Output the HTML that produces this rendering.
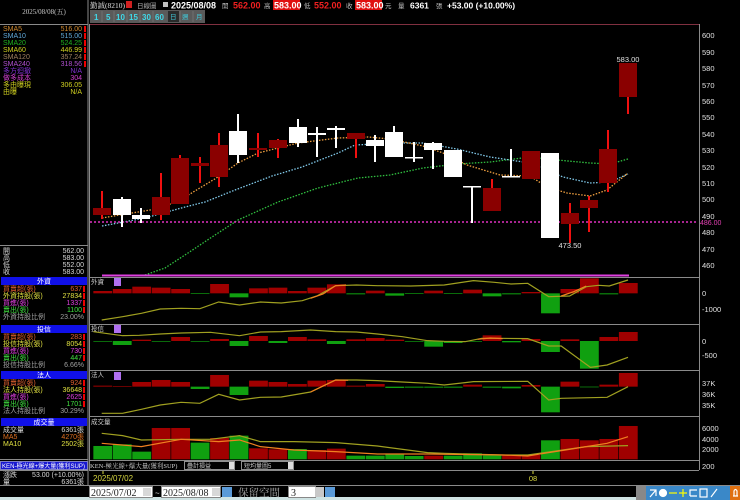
<!DOCTYPE html>
<html><head><meta charset="utf-8"><style>
html,body{margin:0;padding:0;background:#000;width:740px;height:500px;overflow:hidden}
svg{display:block}
text{font-family:"Liberation Sans","Noto Sans CJK TC",sans-serif}
.s{font-size:7px;font-family:"Liberation Serif","Noto Serif CJK SC",serif}
.ax{font-size:7.5px;fill:#e0e0e0}
.sf{font-family:"Liberation Serif","Noto Serif CJK SC",serif}
</style></head><body>
<svg width="740" height="500" viewBox="0 0 740 500" xmlns="http://www.w3.org/2000/svg">
<rect width="740" height="500" fill="#000"/>
<g stroke="#8a8a8a" stroke-width="1" fill="none">
<line x1="88" y1="0" x2="88" y2="485"/>
<line x1="0" y1="24.5" x2="88" y2="24.5"/>
<line x1="0" y1="245.5" x2="88" y2="245.5"/>
<line x1="0" y1="459.5" x2="88" y2="459.5"/>
<line x1="0" y1="470.5" x2="88" y2="470.5"/>
<line x1="0" y1="485.5" x2="740" y2="485.5"/>
</g>
<text x="44" y="14" class="s" fill="#c8c8c8" text-anchor="middle">2025/08/08(五)</text>
<g class="s">
<text x="3" y="31" fill="#d08a30">SMA5</text><text x="82" y="31" fill="#d08a30" text-anchor="end">516.00</text>
<text x="3" y="38" fill="#60a8d8">SMA10</text><text x="82" y="38" fill="#60a8d8" text-anchor="end">515.00</text>
<text x="3" y="45" fill="#20b020">SMA20</text><text x="82" y="45" fill="#20b020" text-anchor="end">524.25</text>
<text x="3" y="52" fill="#d0d020">SMA60</text><text x="82" y="52" fill="#d0d020" text-anchor="end">446.99</text>
<text x="3" y="59" fill="#a08060">SMA120</text><text x="82" y="59" fill="#a08060" text-anchor="end">357.24</text>
<text x="3" y="66" fill="#b050d0">SMA240</text><text x="82" y="66" fill="#b050d0" text-anchor="end">318.56</text>
<text x="3" y="73" fill="#8030d0">多方迴撤</text><text x="82" y="73" fill="#8030d0" text-anchor="end">N/A</text>
<text x="3" y="80" fill="#d040d0">做多成本</text><text x="82" y="80" fill="#d040d0" text-anchor="end">304</text>
<text x="3" y="87" fill="#d0d020">多由曝現</text><text x="82" y="87" fill="#d0d020" text-anchor="end">306.05</text>
<text x="3" y="94" fill="#d0d020">由曝</text><text x="82" y="94" fill="#d0d020" text-anchor="end">N/A</text>
</g>
<g fill="#e00" ><rect x="84" y="26" width="2" height="6"/><rect x="84" y="33" width="2" height="6"/><rect x="84" y="40" width="2" height="6"/><rect x="84" y="47" width="2" height="6"/><rect x="84" y="54" width="2" height="6"/><rect x="84" y="61" width="2" height="6"/></g>
<g class="s" fill="#d8d8d8">
<text x="3" y="253">開</text><text x="84" y="253" text-anchor="end">562.00</text>
<text x="3" y="260">高</text><text x="84" y="260" text-anchor="end">583.00</text>
<text x="3" y="267">低</text><text x="84" y="267" text-anchor="end">552.00</text>
<text x="3" y="274">收</text><text x="84" y="274" text-anchor="end">583.00</text>
</g>
<g class="s">
<rect x="1" y="277" width="86" height="8" fill="#1010e8"/><text x="44" y="283.5" fill="#fff" text-anchor="middle">外資</text>
<text x="3" y="291" fill="#e06030">買賣超(張)</text><text x="82" y="291" fill="#e06030" text-anchor="end">637</text>
<text x="3" y="298" fill="#e0e040">外資持股(張)</text><text x="82" y="298" fill="#e0e040" text-anchor="end">27834</text>
<text x="3" y="305" fill="#e040e0">買進(張)</text><text x="82" y="305" fill="#e040e0" text-anchor="end">1337</text>
<text x="3" y="312" fill="#40e040">賣出(張)</text><text x="82" y="312" fill="#40e040" text-anchor="end">1100</text>
<text x="3" y="319" fill="#a0a0a0">外資持股比例</text><text x="84" y="319" fill="#a0a0a0" text-anchor="end">23.00%</text>
<rect x="1" y="325" width="86" height="8" fill="#1010e8"/><text x="44" y="331.5" fill="#fff" text-anchor="middle">投信</text>
<text x="3" y="339" fill="#e06030">買賣超(張)</text><text x="82" y="339" fill="#e06030" text-anchor="end">283</text>
<text x="3" y="346" fill="#e0e040">投信持股(張)</text><text x="82" y="346" fill="#e0e040" text-anchor="end">8054</text>
<text x="3" y="353" fill="#e040e0">買進(張)</text><text x="82" y="353" fill="#e040e0" text-anchor="end">730</text>
<text x="3" y="360" fill="#40e040">賣出(張)</text><text x="82" y="360" fill="#40e040" text-anchor="end">447</text>
<text x="3" y="367" fill="#a0a0a0">投信持股比例</text><text x="84" y="367" fill="#a0a0a0" text-anchor="end">6.66%</text>
<rect x="1" y="371" width="86" height="8" fill="#1010e8"/><text x="44" y="377.5" fill="#fff" text-anchor="middle">法人</text>
<text x="3" y="385" fill="#e06030">買賣超(張)</text><text x="82" y="385" fill="#e06030" text-anchor="end">924</text>
<text x="3" y="392" fill="#e0e040">法人持股(張)</text><text x="82" y="392" fill="#e0e040" text-anchor="end">36648</text>
<text x="3" y="399" fill="#e040e0">買進(張)</text><text x="82" y="399" fill="#e040e0" text-anchor="end">2625</text>
<text x="3" y="406" fill="#40e040">賣出(張)</text><text x="82" y="406" fill="#40e040" text-anchor="end">1701</text>
<text x="3" y="413" fill="#a0a0a0">法人持股比例</text><text x="84" y="413" fill="#a0a0a0" text-anchor="end">30.29%</text>
<rect x="1" y="418" width="86" height="8" fill="#1010e8"/><text x="44" y="424.5" fill="#fff" text-anchor="middle">成交量</text>
<text x="3" y="432" fill="#d8d8d8">成交量</text><text x="84" y="432" fill="#d8d8d8" text-anchor="end">6361張</text>
<text x="3" y="439" fill="#e07020">MA5</text><text x="84" y="439" fill="#e07020" text-anchor="end">4270張</text>
<text x="3" y="446" fill="#e0e040">MA10</text><text x="84" y="446" fill="#e0e040" text-anchor="end">2502張</text>
<rect x="0.5" y="461.5" width="87" height="8" fill="#1818d0" stroke="#8080c0"/><text x="2" y="468" fill="#fff" font-size="6" textLength="83" lengthAdjust="spacingAndGlyphs">KEN-極光線+爆大量(獲利SUP)</text>
<text x="3" y="477" fill="#d8d8d8">漲跌</text><text x="84" y="477" fill="#d8d8d8" text-anchor="end">53.00 (+10.00%)</text>
<text x="3" y="484" fill="#d8d8d8">量</text><text x="84" y="484" fill="#d8d8d8" text-anchor="end">6361張</text>
</g>
<g fill="#e00"><rect x="83" y="286" width="2" height="6"/><rect x="83" y="293" width="2" height="6"/><rect x="83" y="300" width="2" height="6"/><rect x="83" y="307" width="2" height="6"/><rect x="83" y="334" width="2" height="6"/><rect x="83" y="341" width="2" height="6"/><rect x="83" y="348" width="2" height="6"/><rect x="83" y="355" width="2" height="6"/><rect x="83" y="380" width="2" height="6"/><rect x="83" y="387" width="2" height="6"/><rect x="83" y="394" width="2" height="6"/><rect x="83" y="401" width="2" height="6"/></g>

<text x="90" y="8" fill="#e0e0e0" font-size="7.5" class="sf">勤誠(8210)</text>
<rect x="126" y="1" width="6" height="7" fill="#d02020"/>
<text x="137" y="8" fill="#b0b0b0" font-size="6.5">日線圖</text>
<rect x="163" y="2" width="5" height="5" fill="#c0c0c0"/>
<text x="171" y="8.5" fill="#fff" font-size="9" font-weight="bold">2025/08/08</text>
<text x="222" y="8" fill="#bbb" font-size="6.5">開</text>
<text x="233" y="8.5" fill="#f02020" font-size="9" font-weight="bold">562.00</text>
<text x="264" y="8" fill="#bbb" font-size="6.5">高</text>
<rect x="273" y="0" width="27" height="10" fill="#e01010"/><text x="274" y="8.5" fill="#fff" font-size="9" font-weight="bold">583.00</text>
<text x="304" y="8" fill="#bbb" font-size="6.5">低</text>
<text x="314" y="8.5" fill="#f02020" font-size="9" font-weight="bold">552.00</text>
<text x="346" y="8" fill="#bbb" font-size="6.5">收</text>
<rect x="355" y="0" width="27" height="10" fill="#e01010"/><text x="356" y="8.5" fill="#fff" font-size="9" font-weight="bold">583.00</text>
<text x="385" y="8" fill="#bbb" font-size="6.5">元</text>
<text x="398" y="8" fill="#bbb" font-size="6.5">量</text>
<text x="410" y="8.5" fill="#fff" font-size="8.5" font-weight="bold">6361</text>
<text x="436" y="8" fill="#bbb" font-size="6.5">張</text>
<text x="447" y="8.5" fill="#fff" font-size="8.5" font-weight="bold">+53.00 (+10.00%)</text>
<rect x="90" y="10" width="115" height="13" fill="#5a5a5a"/>
<g font-size="8" fill="#40d8e8" font-weight="bold" class="sf">
<text x="94" y="20">1</text><text x="106" y="20">5</text><text x="116" y="20">10</text><text x="129" y="20">15</text><text x="142" y="20">30</text><text x="155" y="20">60</text>
</g>
<rect x="168" y="11" width="11" height="11" fill="#2a2a2a"/>
<g font-size="6.5" fill="#40c8d8"><text x="170" y="19">日</text><text x="182" y="19">週</text><text x="196" y="19">月</text></g>
<g stroke="#707070"><line x1="102" y1="11" x2="102" y2="22"/><line x1="114" y1="11" x2="114" y2="22"/><line x1="127" y1="11" x2="127" y2="22"/><line x1="140" y1="11" x2="140" y2="22"/><line x1="153" y1="11" x2="153" y2="22"/><line x1="180" y1="11" x2="180" y2="22"/><line x1="193" y1="11" x2="193" y2="22"/></g>

<g stroke="#8a8a8a" fill="none">
<line x1="89" y1="24.5" x2="699" y2="24.5" stroke="#803040"/>
<line x1="699.5" y1="24" x2="699.5" y2="470"/>
<line x1="89" y1="277.5" x2="699" y2="277.5"/>
<line x1="89" y1="324.5" x2="699" y2="324.5"/>
<line x1="89" y1="370.5" x2="699" y2="370.5"/>
<line x1="89" y1="416.5" x2="699" y2="416.5"/>
<line x1="89" y1="460.5" x2="699" y2="460.5"/>
<line x1="89" y1="470.5" x2="699" y2="470.5"/>
<line x1="89.5" y1="24" x2="89.5" y2="470"/>
</g>
<g class="ax">
<text x="702" y="38">600</text><text x="702" y="55">590</text><text x="702" y="71">580</text><text x="702" y="88">570</text><text x="702" y="104">560</text><text x="702" y="120">550</text><text x="702" y="137">540</text><text x="702" y="153">530</text><text x="702" y="170">520</text><text x="702" y="186">510</text><text x="702" y="202">500</text><text x="702" y="219">490</text><text x="702" y="235">480</text><text x="702" y="252">470</text><text x="702" y="268">460</text>
<text x="702" y="296">0</text><text x="702" y="312">-1000</text>
<text x="702" y="344">0</text><text x="702" y="358">-500</text>
<text x="702" y="386">37K</text><text x="702" y="397">36K</text><text x="702" y="408">35K</text>
<text x="702" y="431">6000</text><text x="702" y="442">4000</text><text x="702" y="452">2000</text>
<text x="702" y="469">200</text>
</g>
<text x="700" y="225" fill="#e040b0" font-size="7">486.00</text>

<g fill="none" stroke-width="1.3" stroke-dasharray="1.5,1.5">
<polyline stroke="#30c040" points="145,275 165,268 188,253 212,237 238,220 278,202 318,188 358,178 390,175 423,168 457,164 490,162 530,157 557,160 590,163 610,164 628,159"/>
<polyline stroke="#80c8e8" points="102,226 145,218 185,207 205,202 235,190 272,176 302,167 338,153 355,145 395,143 423,143 457,149 490,157 530,163 563,177 590,183 610,182 628,174"/>
<polyline stroke="#f0a040" points="102,218 162,208 185,197 218,177 238,163 258,153 298,143 338,138 368,137 390,139 423,146 443,153 467,165 500,175 530,176 547,187 567,193 590,196 607,190 628,173"/>
<line x1="90" y1="222" x2="698" y2="222" stroke="#e030c0" stroke-width="1.5" stroke-dasharray="2,2"/>
</g>
<line x1="102" y1="275.5" x2="629" y2="275.5" stroke="#e040e0" stroke-width="2"/>

<g stroke-width="2">
<line x1="102" y1="191" x2="102" y2="219" stroke="#f01010"/><rect x="93" y="208" width="18" height="7" fill="#8a0000"/>
<line x1="122" y1="197" x2="122" y2="227" stroke="#fff"/><rect x="113" y="199" width="18" height="16" fill="#fff"/>
<line x1="141" y1="208" x2="141" y2="223" stroke="#fff"/><rect x="132" y="215" width="18" height="4" fill="#fff"/>
<line x1="161" y1="173" x2="161" y2="220" stroke="#f01010"/><rect x="152" y="197" width="18" height="18" fill="#8a0000"/>
<line x1="180" y1="155" x2="180" y2="204" stroke="#f01010"/><rect x="171" y="158" width="18" height="46" fill="#8a0000"/>
<line x1="200" y1="157" x2="200" y2="183" stroke="#f01010"/><rect x="191" y="163" width="18" height="3" fill="#8a0000"/>
<line x1="219" y1="133" x2="219" y2="187" stroke="#f01010"/><rect x="210" y="145" width="18" height="32" fill="#8a0000"/>
<line x1="238" y1="114" x2="238" y2="163" stroke="#fff"/><rect x="229" y="131" width="18" height="24" fill="#fff"/>
<line x1="258" y1="133" x2="258" y2="157" stroke="#f01010"/><rect x="249" y="148" width="18" height="2" fill="#8a0000"/>
<line x1="278" y1="139" x2="278" y2="158" stroke="#f01010"/><rect x="269" y="140" width="18" height="8" fill="#8a0000"/>
<line x1="298" y1="119" x2="298" y2="147" stroke="#fff"/><rect x="289" y="127" width="18" height="16" fill="#fff"/>
<line x1="317" y1="127" x2="317" y2="157" stroke="#fff"/><rect x="308" y="133" width="18" height="2" fill="#fff"/>
<line x1="336" y1="126" x2="336" y2="148" stroke="#fff"/><rect x="327" y="128" width="18" height="2" fill="#fff"/>
<line x1="356" y1="133" x2="356" y2="158" stroke="#f01010"/><rect x="347" y="133" width="18" height="6" fill="#8a0000"/>
<line x1="375" y1="135" x2="375" y2="162" stroke="#fff"/><rect x="366" y="140" width="18" height="6" fill="#fff"/>
<line x1="394" y1="126" x2="394" y2="157" stroke="#fff"/><rect x="385" y="132" width="18" height="25" fill="#fff"/>
<line x1="414" y1="142" x2="414" y2="162" stroke="#fff"/><rect x="405" y="157" width="18" height="1.5" fill="#fff"/>
<line x1="433" y1="142" x2="433" y2="169" stroke="#fff"/><rect x="424" y="143" width="18" height="7" fill="#fff"/>
<rect x="444" y="150" width="18" height="27" fill="#fff"/>
<line x1="472" y1="186" x2="472" y2="223" stroke="#fff"/><rect x="463" y="186" width="18" height="1.5" fill="#fff"/>
<line x1="492" y1="179" x2="492" y2="211" stroke="#f01010"/><rect x="483" y="188" width="18" height="23" fill="#8a0000"/>
<line x1="511" y1="149" x2="511" y2="177" stroke="#fff"/><rect x="502" y="176" width="18" height="1.5" fill="#fff"/>
<rect x="522" y="151" width="18" height="28" fill="#8a0000"/>
<rect x="541" y="153" width="18" height="85" fill="#fff"/>
<line x1="570" y1="203" x2="570" y2="243" stroke="#f01010"/><rect x="561" y="213" width="18" height="11" fill="#8a0000"/>
<line x1="589" y1="196" x2="589" y2="232" stroke="#f01010"/><rect x="580" y="200" width="18" height="8" fill="#8a0000"/>
<line x1="608" y1="130" x2="608" y2="192" stroke="#f01010"/><rect x="599" y="149" width="18" height="34" fill="#8a0000"/>
<line x1="628" y1="63" x2="628" y2="114" stroke="#f01010"/><rect x="619" y="63" width="18" height="34" fill="#8a0000"/>
</g>
<text x="628" y="62" fill="#e0e0e0" font-size="7.5" text-anchor="middle">583.00</text>
<text x="570" y="248" fill="#e0e0e0" font-size="7.5" text-anchor="middle">473.50</text>

<g font-size="6.5" fill="#d0d0d0" class="sf">
<text x="91" y="284">外資</text><text x="91" y="331">投信</text><text x="91" y="377">法人</text><text x="91" y="424">成交量</text>
</g>
<g fill="#b070f0"><rect x="114" y="278" width="7" height="8"/><rect x="114" y="325" width="7" height="8"/><rect x="114" y="372" width="7" height="8"/></g>

<g transform="translate(85,270) scale(0.4177,0.3333)">
<g fill="#a00000">
<rect x="20" y="63" width="45" height="7"/><rect x="66.6" y="57" width="45" height="13"/><rect x="113.2" y="50" width="45" height="20"/><rect x="159.8" y="53" width="45" height="17"/><rect x="206.4" y="57" width="45" height="13"/><rect x="299.6" y="42" width="45" height="28"/><rect x="392.8" y="55" width="45" height="15"/><rect x="439.4" y="53" width="45" height="17"/><rect x="486" y="63" width="45" height="7"/><rect x="532.6" y="53" width="45" height="17"/><rect x="579.2" y="43" width="45" height="27"/><rect x="672.4" y="62" width="45" height="8"/><rect x="812.2" y="62" width="45" height="8"/><rect x="905.4" y="59" width="45" height="11"/><rect x="1045.2" y="66" width="45" height="4"/><rect x="1138.4" y="57" width="45" height="13"/><rect x="1185" y="25" width="45" height="45"/><rect x="1278.2" y="39" width="45" height="31"/>
</g>
<g fill="#10a010">
<rect x="253" y="70" width="45" height="2"/><rect x="346.2" y="70" width="45" height="12"/><rect x="625.8" y="70" width="45" height="3"/><rect x="719" y="70" width="45" height="7"/><rect x="765.6" y="70" width="45" height="2"/><rect x="858.8" y="70" width="45" height="2"/><rect x="952" y="70" width="45" height="9"/><rect x="998.6" y="70" width="45" height="3"/><rect x="1091.8" y="70" width="45" height="60"/><rect x="1231.6" y="70" width="45" height="3"/>
</g>
<polyline fill="none" stroke="#a0a020" stroke-width="1.2" vector-effect="non-scaling-stroke" points="40,150 90,140 135,130 180,117 230,115 275,116 320,96 370,105 420,96 470,99 520,92 555,78 600,47 650,45 700,47 780,48 860,45 930,32 980,37 1020,42 1060,40 1110,80 1160,78 1200,50 1230,46 1255,48 1300,30"/>
<polyline fill="none" stroke="#f08020" stroke-width="1.2" vector-effect="non-scaling-stroke" points="540,85 570,72 600,47 625,45"/>
<polyline fill="none" stroke="#f08020" stroke-width="1.2" vector-effect="non-scaling-stroke" points="1140,78 1170,65 1200,48"/>
<g fill="#a00000">
<rect x="113.2" y="209" width="45" height="4"/><rect x="206.4" y="201" width="45" height="12"/><rect x="299.6" y="207" width="45" height="6"/><rect x="392.8" y="198" width="45" height="15"/><rect x="486" y="201" width="45" height="12"/><rect x="532.6" y="208" width="45" height="5"/><rect x="625.8" y="208" width="45" height="5"/><rect x="672.4" y="204" width="45" height="9"/><rect x="719" y="209" width="45" height="4"/><rect x="952" y="196" width="45" height="17"/><rect x="1045.2" y="207" width="45" height="6"/><rect x="1138.4" y="208" width="45" height="5"/><rect x="1231.6" y="201" width="45" height="12"/><rect x="1278.2" y="186" width="45" height="27"/>
</g>
<g fill="#10a010">
<rect x="20" y="213" width="45" height="2"/><rect x="66.6" y="213" width="45" height="12"/><rect x="159.8" y="213" width="45" height="2"/><rect x="253" y="213" width="45" height="2"/><rect x="346.2" y="213" width="45" height="15"/><rect x="439.4" y="213" width="45" height="6"/><rect x="579.2" y="213" width="45" height="9"/><rect x="765.6" y="213" width="45" height="2"/><rect x="812.2" y="213" width="45" height="17"/><rect x="858.8" y="213" width="45" height="6"/><rect x="905.4" y="213" width="45" height="2"/><rect x="998.6" y="213" width="45" height="4"/><rect x="1091.8" y="213" width="45" height="33"/><rect x="1185" y="213" width="45" height="83"/>
</g>
<polyline fill="none" stroke="#a0a020" stroke-width="1.2" vector-effect="non-scaling-stroke" points="20,185 90,197 130,196 180,192 230,189 300,187 370,197 420,186 470,185 540,180 600,185 650,186 700,192 760,200 820,212 860,214 910,215 950,205 990,205 1060,206 1110,228 1140,228 1210,292 1250,285 1300,262"/>
<polyline fill="none" stroke="#f08020" stroke-width="1.2" vector-effect="non-scaling-stroke" points="940,208 970,204 1000,206"/>
<g fill="#a00000">
<rect x="20" y="347" width="45" height="3"/><rect x="66.6" y="348" width="45" height="2"/><rect x="113.2" y="336" width="45" height="14"/><rect x="159.8" y="330" width="45" height="20"/><rect x="206.4" y="336" width="45" height="14"/><rect x="299.6" y="315" width="45" height="35"/><rect x="392.8" y="332" width="45" height="18"/><rect x="439.4" y="336" width="45" height="14"/><rect x="486" y="342" width="45" height="8"/><rect x="532.6" y="332" width="45" height="18"/><rect x="579.2" y="330" width="45" height="20"/><rect x="625.8" y="347" width="45" height="3"/><rect x="672.4" y="342" width="45" height="8"/><rect x="905.4" y="344" width="45" height="6"/><rect x="1045.2" y="345" width="45" height="5"/><rect x="1138.4" y="335" width="45" height="15"/><rect x="1231.6" y="344" width="45" height="6"/><rect x="1278.2" y="309" width="45" height="41"/>
</g>
<g fill="#10a010">
<rect x="253" y="350" width="45" height="7"/><rect x="346.2" y="350" width="45" height="25"/><rect x="719" y="350" width="45" height="4"/><rect x="765.6" y="350" width="45" height="3"/><rect x="812.2" y="350" width="45" height="3"/><rect x="858.8" y="350" width="45" height="3"/><rect x="952" y="350" width="45" height="3"/><rect x="998.6" y="350" width="45" height="5"/><rect x="1091.8" y="350" width="45" height="77"/><rect x="1185" y="350" width="45" height="2"/>
</g>
<polyline fill="none" stroke="#a0a020" stroke-width="1.2" vector-effect="non-scaling-stroke" points="40,430 90,430 135,418 180,405 230,397 275,400 320,373 370,390 420,382 470,381 540,366 600,330 650,330 700,332 760,336 820,340 860,345 910,338 930,335 1060,334 1110,390 1140,385 1250,382 1300,350"/>
<polyline fill="none" stroke="#f08020" stroke-width="1.2" vector-effect="non-scaling-stroke" points="540,366 600,330 630,331"/>
<g fill="#a00000">
<rect x="159.8" y="474" width="45" height="94"/><rect x="206.4" y="474" width="45" height="94"/><rect x="299.6" y="504" width="45" height="64"/><rect x="392.8" y="535" width="45" height="33"/><rect x="439.4" y="538" width="45" height="30"/><rect x="532.6" y="540" width="45" height="28"/><rect x="579.2" y="536" width="45" height="32"/><rect x="812.2" y="557" width="45" height="11"/><rect x="998.6" y="556" width="45" height="12"/><rect x="1045.2" y="555" width="45" height="13"/><rect x="1138.4" y="507" width="45" height="61"/><rect x="1185" y="511" width="45" height="57"/><rect x="1231.6" y="507" width="45" height="61"/><rect x="1278.2" y="468" width="45" height="100"/>
</g>
<g fill="#10a010">
<rect x="20" y="528" width="45" height="40"/><rect x="66.6" y="523" width="45" height="45"/><rect x="113.2" y="545" width="45" height="23"/><rect x="253" y="518" width="45" height="50"/><rect x="346.2" y="497" width="45" height="71"/><rect x="486" y="537" width="45" height="31"/><rect x="625.8" y="557" width="45" height="11"/><rect x="672.4" y="557" width="45" height="11"/><rect x="719" y="553" width="45" height="15"/><rect x="765.6" y="558" width="45" height="10"/><rect x="858.8" y="557" width="45" height="11"/><rect x="905.4" y="550" width="45" height="18"/><rect x="952" y="556" width="45" height="12"/><rect x="1091.8" y="511" width="45" height="57"/>
</g>
<polyline fill="none" stroke="#a0a020" stroke-width="1.2" vector-effect="non-scaling-stroke" points="40,490 90,497 135,510 230,508 300,508 370,497 420,515 500,515 600,518 700,528 820,548 860,550 1000,555 1060,555 1100,548 1200,530 1300,527"/>
<polyline fill="none" stroke="#f08020" stroke-width="1.2" vector-effect="non-scaling-stroke" points="40,520 135,530 230,508 320,515 370,510 420,530 500,540 600,545 700,552 820,552 1000,555 1060,558 1100,550 1150,540 1200,530 1250,520 1300,500"/>
</g>

<text x="90" y="468" font-size="6.5" fill="#d0d0d0" class="sf">KEN-極光線+爆大量(獲利SUP)</text>
<rect x="184.5" y="461.5" width="50" height="8" fill="#000" stroke="#909090"/><text x="187" y="468" font-size="6" fill="#ccc">疊計損益</text>
<rect x="229" y="462" width="5" height="7" fill="#ddd"/>
<rect x="241.5" y="461.5" width="52" height="8" fill="#000" stroke="#909090"/><text x="244" y="468" font-size="6" fill="#ccc">短均量圖5</text>
<rect x="288" y="462" width="5" height="7" fill="#ddd"/>
<text x="93" y="481" fill="#d8d840" font-size="8">2025/07/02</text>
<text x="533" y="481" fill="#d8d840" font-size="7.5" text-anchor="middle">08</text>
<line x1="533" y1="471" x2="533" y2="474" stroke="#d8d840"/>
<line x1="103" y1="471" x2="103" y2="474" stroke="#d8d840"/>

<rect x="0" y="486" width="740" height="14" fill="#000"/>
<rect x="0" y="497" width="740" height="3" fill="#cfe3e3"/>
<rect x="89.5" y="486.5" width="63" height="11" fill="#fff" stroke="#888"/><text x="91" y="496" font-size="10" fill="#222" class="sf">2025/07/02</text>
<rect x="143" y="488" width="8" height="8" fill="#d8d8d8"/>
<text x="155" y="496" fill="#ddd" font-size="8">~</text>
<rect x="161.5" y="486.5" width="59" height="11" fill="#fff" stroke="#888"/><text x="163" y="496" font-size="10" fill="#222" class="sf">2025/08/08</text>
<rect x="212" y="488" width="8" height="8" fill="#d8d8d8"/>
<rect x="222" y="487" width="10" height="10" fill="#5a9ad8"/>
<text x="238" y="496" fill="#a8a8a8" font-size="10.5" class="sf">保留空間</text>
<rect x="288.5" y="486.5" width="27" height="11" fill="#fff" stroke="#888"/><text x="291" y="496" font-size="10" fill="#222" class="sf">3</text>
<rect x="315" y="487" width="9" height="10" fill="#c8c8c8"/>
<rect x="325" y="487" width="10" height="10" fill="#5a9ad8"/>
<rect x="636" y="486" width="10" height="14" fill="#888"/>
<rect x="646" y="486" width="86" height="14" fill="#3a88c8"/>
<rect x="730" y="486" width="10" height="14" fill="#e07010"/>
<g stroke="#fff" stroke-width="1.2" fill="none">
<path d="M650 497 L656 490 M650 490 L656 490 L656 496"/>
<circle cx="663" cy="493" r="3.5" fill="#fff"/>
<line x1="669" y1="493" x2="677" y2="493" stroke="#ff0"/>
<path d="M679 493 H687 M683 489 V497" stroke="#ff0"/>
<path d="M690 496 L690 490 L697 490 M690 496 L697 496"/>
<rect x="700" y="489" width="7" height="8"/>
<path d="M711 497 L717 489"/>
<path d="M733 496 H738 M734 496 V491 Q735.5 488 737 491 V496"/>
</g>
</svg>
</body></html>
